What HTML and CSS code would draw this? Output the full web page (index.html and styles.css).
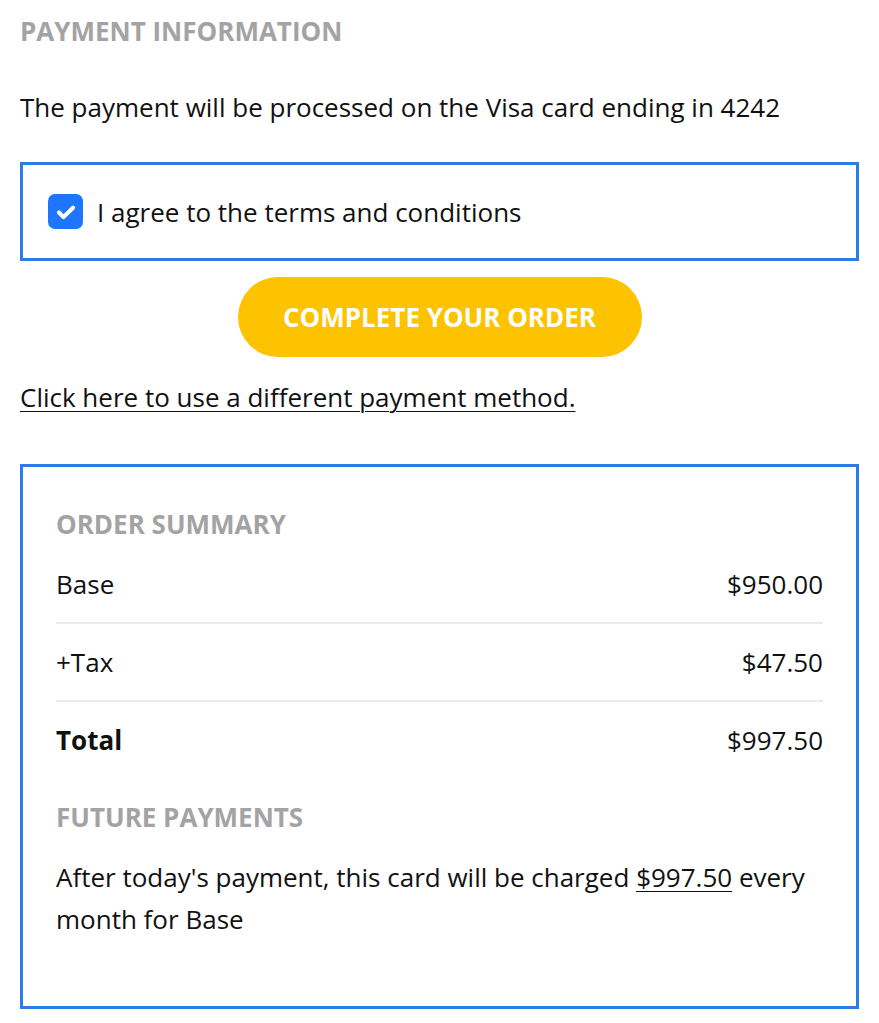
FILE: index.html
```html
<!DOCTYPE html>
<html>
<head>
<meta charset="utf-8">
<link rel="stylesheet" href="styles.css">
</head>
<body>
<div class="page">
  <h2 class="section-title">PAYMENT INFORMATION</h2>
  <p class="card-note">The payment will be processed on the Visa card ending in 4242</p>
  <label class="terms">
    <span class="checkbox">
      <svg viewBox="0 0 24 24" width="26" height="26"><path d="M5.5 12.5l4.2 4.2L18.5 8" fill="none" stroke="#fff" stroke-width="3.8" stroke-linecap="round" stroke-linejoin="round"/></svg>
    </span>
    <span class="terms-text">I agree to the terms and conditions</span>
  </label>
  <div class="btn-row">
    <button class="complete-btn">COMPLETE YOUR ORDER</button>
  </div>
  <a class="alt-link" href="#">Click here to use a different payment method.</a>

  <div class="summary">
    <h2 class="section-title summary-title">ORDER SUMMARY</h2>
    <div class="row first"><span>Base</span><span>$950.00</span></div>
    <div class="row"><span>+Tax</span><span>$47.50</span></div>
    <div class="row total"><span class="bold">Total</span><span>$997.50</span></div>
    <h2 class="section-title future-title">FUTURE PAYMENTS</h2>
    <p class="future-text">After today's payment, this card will be charged <a href="#">$997.50</a> every month for Base</p>
  </div>
</div>
</body>
</html>
```

FILE: styles.css
```css
* { box-sizing: border-box; }
html, body { margin: 0; padding: 0; background: #fff; }
body {
  font-family: "Open Sans", "Noto Sans", sans-serif;
  color: #111;
  font-size: 26px;
}
.page {
  padding: 8px 20px 0 20px;
}
.section-title {
  margin: 0;
  font-size: 26px;
  font-weight: 700;
  color: #a3a3a3;
  line-height: 46px;
}
.card-note {
  margin: 30px 0 0 0;
  line-height: 46px;
}
.terms {
  margin-top: 32px;
  display: flex;
  align-items: center;
  height: 99px;
  border: 3px solid #2d7be5;
  padding-left: 25px;
}
.checkbox {
  width: 35px;
  height: 35px;
  border-radius: 7px;
  background: #1f75fe;
  display: flex;
  align-items: center;
  justify-content: center;
  margin-right: 14px;
  flex: none;
}
.terms-text { line-height: 46px; }
.btn-row {
  display: flex;
  justify-content: center;
  margin-top: 16px;
}
.complete-btn {
  width: 404px;
  height: 80px;
  border: none;
  border-radius: 40px;
  background: #fdc200;
  color: #fff;
  font-family: "Open Sans", sans-serif;
  font-weight: 700;
  font-size: 26px;
  padding: 0;
}
.alt-link {
  display: block;
  margin-top: 17px;
  color: #111;
  line-height: 46px;
  text-decoration: underline;
  text-underline-offset: 4px;
  text-decoration-thickness: 1px;
}
.summary {
  margin-top: 44px;
  border: 3px solid #2d7be5;
  padding: 34px 33px 50px 33px;
  height: 545px;
}
.row {
  display: flex;
  justify-content: space-between;
  line-height: 36px;
  padding: 20px 0;
  border-bottom: 2px solid #ebebeb;
}
.row.first { padding-top: 19px; }
.row.total { border-bottom: none; padding-bottom: 14px; }
.bold { font-weight: 700; }
.future-title { margin-top: 22px; }
.future-text {
  margin: 16px 0 0 0;
  line-height: 42px;
}
.future-text a { color: #111; text-underline-offset: 4px; text-decoration-thickness: 1px; }
```
